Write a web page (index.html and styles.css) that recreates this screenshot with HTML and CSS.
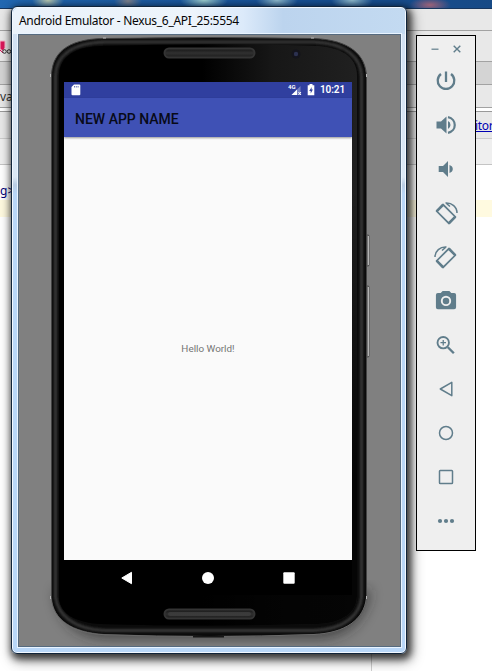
FILE: index.html
```html
<!DOCTYPE html>
<html lang="en">
<head>
<meta charset="utf-8">
<title>Android Emulator</title>
<link rel="stylesheet" href="styles.css">
</head>
<body>
<div class="desktop">
  <div class="ide">
    <div class="taskbar"></div>
    <div class="strip menu"></div>
    <div class="strip tools"><svg class="badge" width="12" height="16" viewBox="0 0 12 16"><path d="M0 2H5V9L3 12L0 10Z" fill="#d9165a" stroke="#f9b8cc"/><path d="M0 11L3 14" stroke="#d9165a"/><g fill="none" stroke="#333"><circle cx="4.500" cy="12.500" r="1.800"/><circle cx="9" cy="12.500" r="1.800"/></g></svg></div>
    <div class="strip crumbs"></div>
    <div class="strip tabs"><span>va</span></div>
    <div class="gap"></div>
    <div class="strip links"><a>itor</a></div>
    <div class="strip sub"></div>
    <div class="editor">
      <div class="code">g&gt;</div>
      <div class="current"></div>
    </div>
    <div class="guide"></div>
  </div>

  <div class="window">
    <div class="titlebar"><span>Android Emulator - Nexus_6_API_25:5554</span></div>
    <div class="client">
      <svg class="phone" width="380" height="611" viewBox="19 35 380 611">
        <defs>
          <linearGradient id="glass" x1="0" y1="0" x2="1" y2="0"><stop offset=".48" stop-color="#000"/><stop offset=".72" stop-color="#171717"/><stop offset="1" stop-color="#202020"/></linearGradient>
          <linearGradient id="low" x1="0" y1="0" x2="0" y2="1"><stop offset=".25" stop-color="#000" stop-opacity="0"/><stop offset=".75" stop-color="#000" stop-opacity=".85"/></linearGradient>
          <linearGradient id="slot" x1="0" y1="0" x2="0" y2="1"><stop stop-color="#161616"/><stop offset=".5" stop-color="#303030"/><stop offset="1" stop-color="#1c1c1c"/></linearGradient>
          <filter id="soft" x="-20%" y="-20%" width="140%" height="140%"><feGaussianBlur stdDeviation="7"/></filter>
          <filter id="blur"><feGaussianBlur stdDeviation=".9"/></filter>
        </defs>
        <path d="M56 590C58 620 76 638 110 638H318C348 637 366 620 370 590Z" fill="#222" opacity=".65" filter="url(#soft)"/>
        <g fill="#777" stroke="#303030" stroke-width=".6"><rect x="365" y="235" width="4" height="31" rx="1"/><rect x="365" y="286" width="4" height="71" rx="1"/></g>
        <path d="M368.500 236V265M368.500 287V356" stroke="#bbb" stroke-width=".9"/>
        <path d="M51.500 77C51.500 54 66 39 104 38.500Q209 36.500 314 38.500C350 40 366 55 366.500 77V598C364 620 345 633 314 634.500Q209 638.500 104 634.500C72 632 53 620 51.500 598Z" fill="#0b0b0b" stroke="#444"/>
        <path d="M51 598C53 620 72 633 104 634.700Q209 638.500 314 634.500C345 633 364 620 366.500 598" fill="none" stroke="#747474" stroke-width=".8"/>
        <path d="M55.500 76C56 57 70 43 105 42H314C346 43 361 58 361.500 76V597C360 615 345 629 314 630.500H105C73 629 58 615 55.500 597Z" fill="none" stroke="#373737" stroke-width="3" filter="url(#blur)"/>
        <path d="M59 76C59 60 70 47 100 46Q209 42.500 318 46C346 48 357 60 357 76V596C357 612 343 623 318 624Q209 627 100 624C72 622 59 612 59 596Z" fill="url(#glass)"/>
        <path d="M59 76C59 60 70 47 100 46Q209 42.500 318 46C346 48 357 60 357 76V596C357 612 343 623 318 624Q209 627 100 624C72 622 59 612 59 596Z" fill="url(#low)"/>
        <g fill="url(#slot)" stroke="#343434" stroke-width="2"><rect x="164.500" y="48.500" width="90" height="9" rx="4.500"/><rect x="164.500" y="609.500" width="90" height="9" rx="4.500"/></g>
        <rect x="168" y="612" width="83" height="4" rx="2" fill="#444" opacity=".65"/>
        <circle cx="296" cy="54" r="4.500" fill="#14141c"/><circle cx="296" cy="54" r="2.200" fill="#2c3150"/>
        <rect x="193" y="636" width="31" height="1.500" fill="#161616"/>
        <g fill="#b8b8b8"><rect x="103" y="37.500" width="3" height="1"/><rect x="311" y="37.500" width="3" height="1"/><rect x="50" y="74" width="1" height="3"/><rect x="366" y="74" width="1" height="3"/><rect x="50" y="596" width="1" height="3"/><rect x="366" y="596" width="1" height="3"/></g>
      </svg>
      <div class="screen">
        <div class="status">
          <svg class="sd" width="10" height="12" viewBox="0 0 10 12"><path d="M3 .5H8.300Q9.300.5 9.300 1.500V10.300Q9.300 11.300 8.300 11.300H1.500Q.5 11.300.5 10.300V3Z" fill="#fff"/><path d="M3.500 2V3.500M5.300 2V3.500M7.100 2V3.500" stroke="#303f9f" stroke-width=".7"/></svg>
          <svg width="14" height="12" viewBox="0 0 14 12"><path d="M12.500 2V11H3.500Z" fill="#7782c2"/><path d="M9 5.500V11H3.500Z" fill="#fff"/><path d="M10.500 8L13 11M13 8L10.500 11" stroke="#fff"/><text x="0" y="5" font-size="6" font-weight="700" fill="#fff" font-family="Roboto">4G</text></svg>
          <svg width="8" height="12" viewBox="0 0 8 12"><path d="M2.500 0H5.500V1.300H7.300V11.300H.7V1.300H2.500Z" fill="#fff"/><path d="M4.700 3L2.200 7H3.700V9.500L5.900 5.600H4.500Z" fill="#303f9f"/></svg>
          <span class="clock">10:21</span>
        </div>
        <div class="appbar">NEW APP NAME</div>
        <div class="content"><span>Hello World!</span></div>
        <div class="nav">
          <svg width="12" height="14" viewBox="0 0 12 14"><path d="M.8 7L10.500 1.300V12.700Z" fill="#fff" stroke="#fff" stroke-linejoin="round"/></svg>
          <svg width="12" height="12" viewBox="0 0 12 12"><circle cx="6" cy="6" r="6" fill="#fff"/></svg>
          <svg width="12" height="12" viewBox="0 0 12 12"><rect x=".3" y=".3" width="11.400" height="11.400" rx="1" fill="#fff"/></svg>
        </div>
      </div>
    </div>
  </div>

  <div class="toolbar">
    <div class="controls">
      <svg width="8" height="8" viewBox="0 0 8 8"><path d="M.5 4.200H7.500" stroke-width="1.200"/></svg>
      <svg width="8" height="8" viewBox="0 0 8 8"><path d="M.7.700L7.300 7.300M7.300.7L.7 7.300" stroke-width="1.400"/></svg>
    </div>
    <svg class="tool" viewBox="0 0 24 24"><path d="M12 2.500V13M7 5A8.300 8.300 0 1 0 17 5" stroke-width="2.300"/></svg>
    <svg class="tool" viewBox="0 0 24 24"><path class="solid" d="M2.500 8.500H7L12.500 3.500V20.500L7 15.500H2.500ZM14 8Q16.500 9.200 16.500 12T14 16Z"/><path d="M14 4.200C23 6 23 18 14 19.800" stroke-width="2.200"/></svg>
    <svg class="tool" viewBox="0 0 24 24"><path class="solid" d="M4.700 9H9L14 4V20L9 15H4.700ZM15.500 8Q18.800 9.200 18.800 12T15.500 16Z"/></svg>
    <svg class="tool" viewBox="0 0 24 24"><path d="M9.300 3.800L2.800 10.300L14.700 22.200L21.200 15.700Z" stroke-width="1.700"/><path d="M9.300 3.500L2.500 10.300M14.700 22.500L21.500 15.700" stroke-width="2.500"/><path d="M11.500 2C18 1.500 23 6 23 12M12.500 2.500L16 5.500" stroke-width="1.500"/></svg>
    <svg class="tool" viewBox="0 0 24 24"><path d="M14.700 3.800L21.200 10.300L9.300 22.200L2.800 15.700Z" stroke-width="1.700"/><path d="M14.700 3.500L21.500 10.300M9.300 22.500L2.500 15.700" stroke-width="2.500"/><path d="M12.500 2C6 1.500 1 6 1 12M11.500 2.500L8 5.500" stroke-width="1.500"/></svg>
    <svg class="tool" viewBox="-.5 .5 25 25"><path class="solid" fill-rule="evenodd" d="M8.500 2.500H15.500L17.500 4.700H20.500Q22.500 4.700 22.500 6.700V19.500Q22.500 21.500 20.500 21.500H3.500Q1.500 21.500 1.500 19.500V6.700Q1.500 4.700 3.500 4.700H6.500ZM12 7.500A5.400 5.400 0 1 0 12 18.300A5.400 5.400 0 1 0 12 7.500Z"/><circle class="solid" cx="12" cy="12.900" r="3.400"/></svg>
    <svg class="tool" viewBox="-1 -1 26 26"><circle cx="9" cy="9.500" r="6.200" stroke-width="2"/><path d="M9 6.500V12.500M6 9.500H12" stroke-width="1.400"/><path d="M14 14.500L20.500 21" stroke-width="2.500"/></svg>
    <svg class="tool" viewBox="0 0 24 24"><path d="M6.300 12L17.800 5.300V18.700Z" stroke-width="1.500" stroke-linejoin="round"/></svg>
    <svg class="tool" viewBox="0 0 24 24"><circle cx="12" cy="12" r="6.500" stroke-width="1.500"/></svg>
    <svg class="tool" viewBox="0 0 24 24"><rect x="5.500" y="5.500" width="13" height="13" rx=".8" stroke-width="1.500"/></svg>
    <svg class="tool" viewBox="0 0 24 24"><g class="solid"><circle cx="6" cy="12" r="2.100"/><circle cx="12" cy="12" r="2.100"/><circle cx="18" cy="12" r="2.100"/></g></svg>
  </div>
</div>
</body>
</html>
```
FILE: styles.css
```css
* { box-sizing: border-box; }
body { margin: 0; background: #fff; }
svg { display: block; flex: none; }
.desktop { position: relative; width: 492px; height: 671px; overflow: hidden; }

.ide { display: flex; flex-direction: column; height: 671px; font-family: "Noto Sans", sans-serif; font-size: 12px; }
.taskbar {
  height: 9px;
  border-bottom: 1px solid #17365e;
  background:
    radial-gradient(ellipse 16px 10px at 48px 0, #bccbb0, transparent),
    radial-gradient(ellipse 14px 9px at 128px 1px, #80828c, transparent),
    radial-gradient(ellipse 24px 10px at 204px 0, #9fd0cf, transparent),
    radial-gradient(ellipse 21px 10px at 277px 0, #91bdce, transparent),
    radial-gradient(ellipse 21px 10px at 352px 0, #91bdce, transparent),
    radial-gradient(ellipse 21px 8px at 430px 5px, #9b6178, transparent),
    linear-gradient(90deg, #2167b1, #175095 60%, #174a86);
}
.strip { border-bottom: 1px solid #a2a2a2; background: #e8e8e8; }
.menu { height: 22px; }
.tools { height: 31px; padding-top: 8px; }
.crumbs { height: 23px; background: #d4d4d4; }
.tabs { height: 23px; color: #333; line-height: 24px; }
.gap { height: 4px; background: #fff; border-bottom: 1px solid #999; }
.links { height: 27px; display: flex; justify-content: flex-end; border-color: #ccc; line-height: 27px; }
.links a { color: #0000b4; text-decoration: underline; white-space: nowrap; width: 17px; letter-spacing: -.3px; }
.sub { height: 26px; border-color: #c4c4c4; background: #efefef; }
.editor { padding-top: 17px; }
.code { height: 18px; line-height: 18px; color: #00007a; }
.current { height: 17px; background: #fffae0; }
.guide { flex: 1; width: 372px; border-right: 1px solid #d0d0d0; }

.window {
  position: absolute; left: 11px; top: 6px; width: 396px; height: 648px;
  display: flex; flex-direction: column;
  padding: 0 5px 6px 6px;
  border: 1px solid #10243a;
  border-radius: 6px;
  background: linear-gradient(180deg, #b9d2ee 0, #d1e1f3 20px, #dbe8f5 170px, #b9cde4 178px, #b9d7f8 187px, #b9d7f8 100%);
  box-shadow: inset 0 0 0 1px #f2f8ff, 2px 3px 7px 2px rgba(0,0,0,.65), 3px 5px 13px 2px rgba(0,0,0,.4);
}
.titlebar {
  height: 26px; margin: 1px -4px 0 -5px; padding: 0 6px;
  font: 12px/25px "Noto Sans", sans-serif; letter-spacing: -.3px; color: #050505;
  background: linear-gradient(90deg, #eaf2fa 0, #edf4fb 180px, #dceafa 230px, #bcd4ee 270px, #c3daf1 100%);
  border-radius: 5px 5px 0 0;
  white-space: nowrap;
}
.client { position: relative; flex: 1; border: 1px solid #566b80; background: #808080; box-shadow: 0 0 0 1px #e9f4ff; }
.phone { position: absolute; left: 0; top: 0; }
.screen { position: absolute; left: 45px; top: 47px; width: 288px; height: 513px; display: flex; flex-direction: column; background: #000; font-family: Roboto, sans-serif; }
.status { height: 16px; display: flex; align-items: center; gap: 5px; padding: 0 7px; background: #303f9f; }
.sd { margin-right: auto; }
.clock { color: #fff; font-size: 10px; font-weight: 600; line-height: 16px; letter-spacing: -.1px; }
.appbar { height: 39px; padding-left: 11px; line-height: 42px; background: #3f51b5; color: #080a18; font-size: 14px; font-weight: 500; position: relative; box-shadow: 0 1px 2px rgba(0,0,0,.4); }
.content { flex: 1; display: flex; align-items: center; justify-content: center; background: #fafafa; color: #747474; font-size: 9.9px; }
.nav { height: 35px; display: flex; align-items: center; justify-content: space-between; padding: 0 57px; }

.toolbar {
  position: absolute; left: 416px; top: 35px; width: 60px; height: 516px;
  display: flex; flex-direction: column; align-items: center; gap: 20px;
  border: 1px solid #000; background: #efefef;
}
.toolbar svg { fill: none; stroke: #607d8b; }
.toolbar .solid { fill: #607d8b; stroke: none; }
.controls { display: flex; gap: 14px; height: 13px; padding-top: 9px; }
.tool { width: 24px; height: 24px; }
```
